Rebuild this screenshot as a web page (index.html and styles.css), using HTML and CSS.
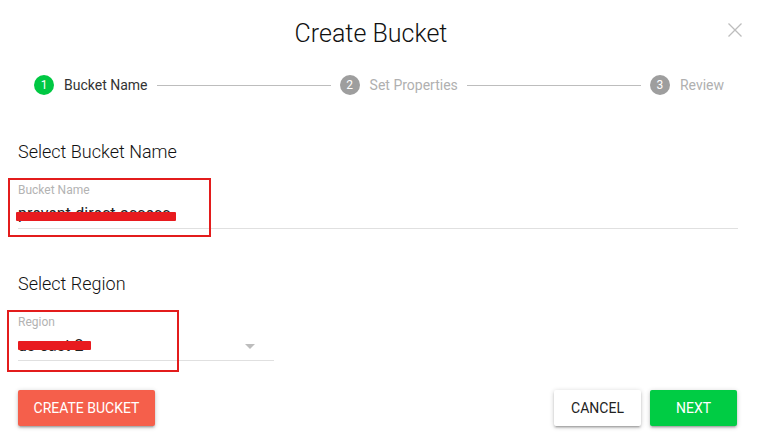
FILE: index.html
```html
<!DOCTYPE html>
<html>
<head>
<meta charset="utf-8">
<link rel="stylesheet" href="styles.css">
</head>
<body>
<div class="dialog">
  <header class="header">
    <span></span>
    <h1 class="title">Create Bucket</h1>
    <button class="close" aria-label="close">
      <svg width="14" height="14" viewBox="0 0 14 14"><path d="M0.5 0.5 L13.5 13.5 M13.5 0.5 L0.5 13.5" stroke="#bdbdbd" stroke-width="1.3" fill="none"/></svg>
    </button>
  </header>

  <div class="stepper">
    <div class="step active"><span class="num">1</span><span class="label">Bucket Name</span></div>
    <div class="connector"></div>
    <div class="step"><span class="num">2</span><span class="label">Set Properties</span></div>
    <div class="connector"></div>
    <div class="step"><span class="num">3</span><span class="label">Review</span></div>
  </div>

  <h2 class="section first">Select Bucket Name</h2>
  <div class="field wide">
    <label class="flabel">Bucket Name</label>
    <div class="finput">prevent-direct-access</div>
  </div>

  <h2 class="section second">Select Region</h2>
  <div class="field narrow">
    <label class="flabel">Region</label>
    <div class="finput select">
      <span>us-east-2</span>
      <svg class="caret" width="10" height="5" viewBox="0 0 10 5"><path d="M0 0 L10 0 L5 5 Z" fill="#bdbdbd"/></svg>
    </div>
  </div>

  <div class="actions">
    <button class="btn danger">CREATE BUCKET</button>
    <div class="spacer"></div>
    <button class="btn plain">CANCEL</button>
    <button class="btn primary">NEXT</button>
  </div>
</div>

<div class="mark box1"></div>
<div class="mark box2"></div>
<div class="scribble s1"></div>
<div class="scribble s2"></div>
</body>
</html>
```

FILE: styles.css
```css
* { box-sizing: border-box; }
html, body { margin: 0; padding: 0; background: #fff; }
body {
  position: relative;
  width: 757px;
  height: 448px;
  overflow: hidden;
  font-family: Roboto, "Liberation Sans", sans-serif;
  color: #222;
}
.dialog {
  padding: 0 19px 0 18px;
}
.header {
  display: grid;
  grid-template-columns: 1fr auto 1fr;
  height: 68px;
  align-items: center;
  margin-left: -18px;
  margin-right: -4px;
}
.title {
  margin: 0;
  font-size: 25px;
  font-weight: 300;
  line-height: 28px;
  color: #111;
}
.close {
  justify-self: end;
  align-self: start;
  margin-top: 23px;
  padding: 0;
  border: 0;
  background: none;
  width: 14px;
  height: 14px;
  display: block;
}
.close svg { display: block; }

.stepper {
  display: flex;
  align-items: center;
  height: 34px;
  padding: 0 14px 0 16px;
}
.step {
  display: flex;
  align-items: center;
  gap: 10px;
  font-size: 14px;
  color: #b0b0b0;
}
.step .num {
  width: 20px;
  height: 20px;
  border-radius: 50%;
  background: #9e9e9e;
  color: #fff;
  font-size: 12px;
  display: flex;
  align-items: center;
  justify-content: center;
}
.step.active { color: #333; }
.step.active .num { background: #00c843; }
.connector {
  flex: 1;
  height: 1px;
  background: #bdbdbd;
  margin: 0 9px;
}

.section {
  margin: 0;
  font-size: 18px;
  font-weight: 300;
  line-height: 24px;
  color: #111;
}
.section.first { margin-top: 38px; }
.section.second { margin-top: 43px; }

.field { margin-top: 18px; }
.field.narrow { width: 256px; }
.flabel {
  display: block;
  font-size: 12px;
  line-height: 16px;
  color: #b3b3b3;
}
.finput {
  margin-top: 6px;
  height: 25px;
  font-size: 16px;
  line-height: 20px;
  color: #222;
  border-bottom: 1px solid #e0e0e0;
}
.finput.select {
  display: flex;
  align-items: flex-start;
  justify-content: space-between;
  padding-right: 19px;
}
.caret { display: block; margin-top: 8px; }

.actions {
  display: flex;
  align-items: center;
  gap: 9px;
  margin-top: 29px;
  padding-right: 1px;
}
.spacer { flex: 1; }
.btn {
  height: 36px;
  min-width: 87px;
  padding: 0 16px;
  border: 0;
  border-radius: 2px;
  white-space: nowrap;
  font-family: Roboto, "Liberation Sans", sans-serif;
  font-size: 14px;
  font-weight: 400;
  box-shadow: 0 1px 5px rgba(0,0,0,.2), 0 2px 2px rgba(0,0,0,.14), 0 3px 1px -2px rgba(0,0,0,.12);
}
.btn.danger { background: #f55f4b; color: #fff; width: 137px; padding: 0; }
.btn.plain { background: #fff; color: #222; }
.btn.primary { background: #00cc44; color: #fff; }

.mark {
  position: absolute;
  border: 2px solid #e31c1c;
}
.box1 { left: 8px; top: 178px; width: 203px; height: 59px; }
.box2 { left: 7px; top: 310px; width: 172px; height: 62px; }
.scribble {
  position: absolute;
  background: #e81b1f;
  height: 9px;
  border-radius: 1px;
}
.s1 { left: 16px; top: 212px; width: 160px; }
.s2 { left: 18px; top: 341px; width: 73px; }
```
